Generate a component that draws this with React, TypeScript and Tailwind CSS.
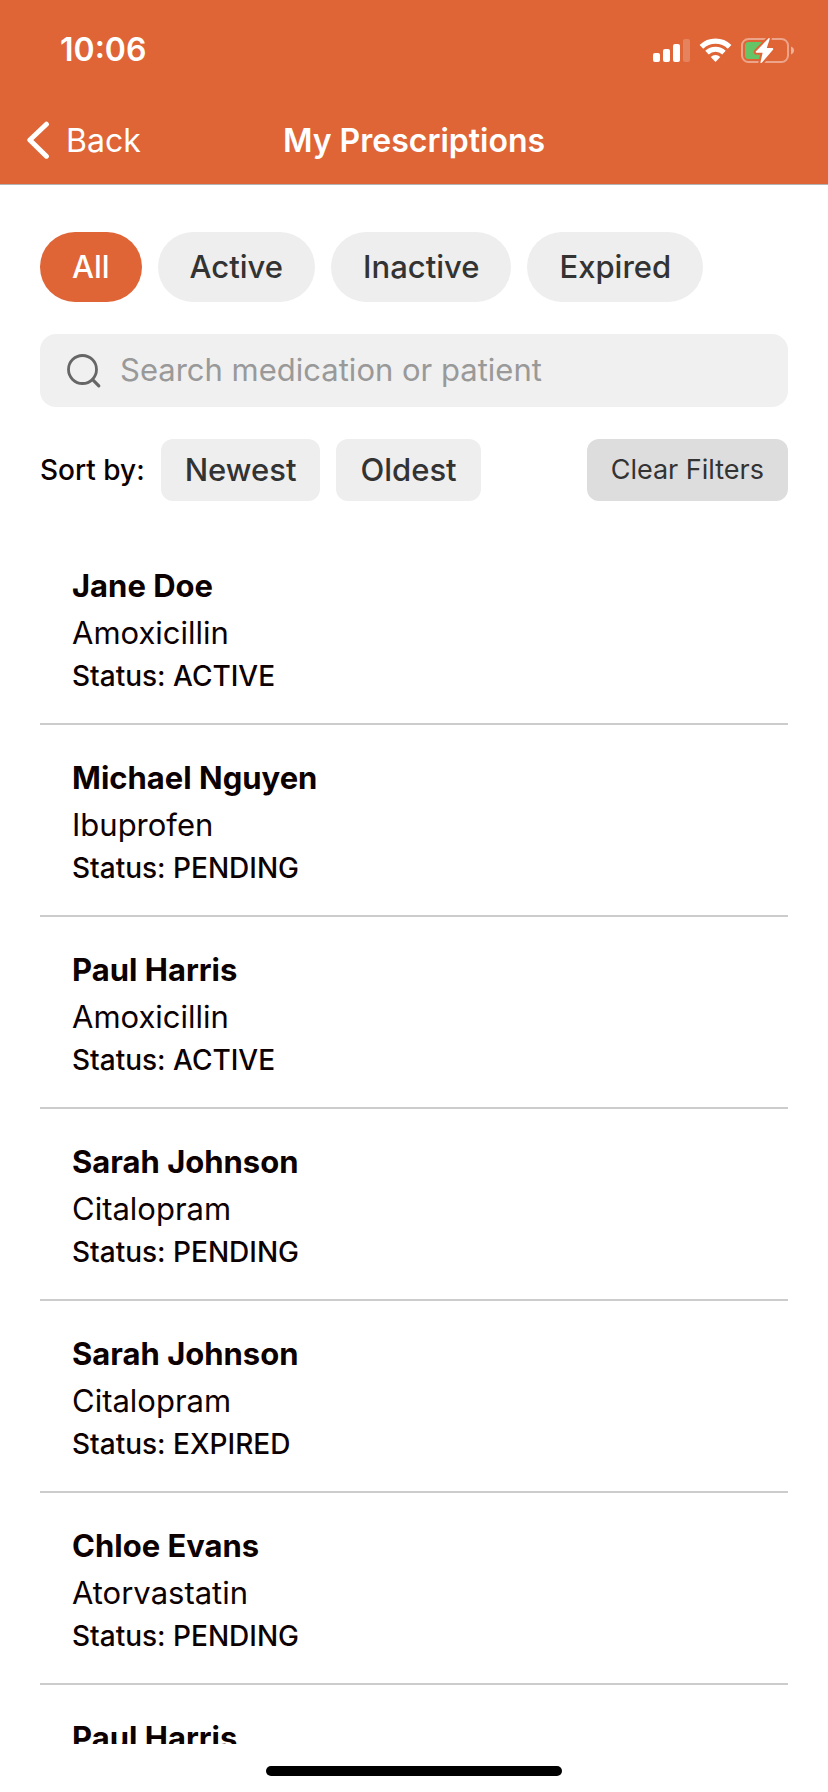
import { useState } from "react";

type Prescription = { id: number; patient: string; medication: string; status: string };

const prescriptions: Prescription[] = [
  { id: 1, patient: "Jane Doe", medication: "Amoxicillin", status: "ACTIVE" },
  { id: 2, patient: "Michael Nguyen", medication: "Ibuprofen", status: "PENDING" },
  { id: 3, patient: "Paul Harris", medication: "Amoxicillin", status: "ACTIVE" },
  { id: 4, patient: "Sarah Johnson", medication: "Citalopram", status: "PENDING" },
  { id: 5, patient: "Sarah Johnson", medication: "Citalopram", status: "EXPIRED" },
  { id: 6, patient: "Chloe Evans", medication: "Atorvastatin", status: "PENDING" },
  { id: 7, patient: "Paul Harris", medication: "Ibuprofen", status: "ACTIVE" },
];

const filters = ["All", "Active", "Inactive", "Expired"];

function SignalIcon() {
  return (
    <svg width="37" height="23" viewBox="0 0 37 23" fill="#fff" aria-hidden="true">
      <rect x="0" y="14" width="7" height="9" rx="2" />
      <rect x="10" y="10" width="7" height="13" rx="2" />
      <rect x="20" y="5" width="7" height="18" rx="2" />
      <rect x="30" y="0" width="7" height="23" rx="2" opacity="0.2" />
    </svg>
  );
}

function WifiIcon() {
  return (
    <svg width="33" height="24" viewBox="0 0 33 24" fill="none" stroke="#fff" aria-hidden="true">
      <path d="M2.4 8.9 A20.2 20.2 0 0 1 30.6 8.9" strokeWidth="5.2" />
      <path d="M8 14.6 A12.2 12.2 0 0 1 25 14.6" strokeWidth="5" />
      <path d="M16.5 24 L11.7 19 A6.8 6.8 0 0 1 21.3 19 Z" fill="#fff" stroke="none" />
    </svg>
  );
}

function BatteryIcon() {
  return (
    <svg width="53" height="27" viewBox="0 0 53 27" fill="none" aria-hidden="true">
      <rect x="1" y="2" width="46" height="23" rx="6.5" stroke="#fff" strokeOpacity="0.42" strokeWidth="2" />
      <path d="M50 9.6 C52 10.3 53 11.8 53 13.5 C53 15.2 52 16.7 50 17.4 Z" fill="#fff" fillOpacity="0.5" />
      <rect x="4" y="5" width="19" height="17" rx="3.5" fill="#65c466" />
      <path
        d="M27.6 1.2 L14.8 14.6 Q14.4 15.6 15.4 15.8 L21.6 15.8 L19.4 25.4 Q20 26.6 21 25.6 L32.2 12.4 Q32.4 11.2 31.4 11 L25.8 11 L28.8 1.8 Q28.6 0.6 27.6 1.2 Z"
        fill="#fff"
        stroke="#df6436"
        strokeWidth="4"
        paintOrder="stroke"
        strokeLinejoin="round"
      />
    </svg>
  );
}

export default function App() {
  const [filter, setFilter] = useState("All");
  const [query, setQuery] = useState("");

  return (
    <div className="flex h-screen flex-col overflow-hidden bg-white font-['Inter','Liberation_Sans',sans-serif] text-[#0d0000]">
      <header className="shrink-0 border-b border-[#b3b3b3] bg-[#df6436] text-white">
        <div className="flex h-24 items-center justify-between pt-1 pr-[34px] pl-[60px]">
          <span className="text-[32px] leading-[38px] font-semibold">10:06</span>
          <div className="flex items-center gap-[9px]">
            <SignalIcon />
            <WifiIcon />
            <BatteryIcon />
          </div>
        </div>
        <div className="grid h-22 grid-cols-[1fr_auto_1fr] items-center pt-0.5">
          <button type="button" className="flex items-center gap-4 pl-[26px] text-[32px] leading-10">
            <svg width="24" height="40" viewBox="0 0 24 40" fill="none" stroke="#fff" strokeWidth="5" strokeLinecap="round" strokeLinejoin="round" aria-hidden="true">
              <path d="M20.4 3.2 L3.8 19 L20.4 35.2" />
            </svg>
            Back
          </button>
          <h1 className="text-[32px] leading-10 font-semibold">My Prescriptions</h1>
        </div>
      </header>

      <main className="flex min-h-0 flex-1 flex-col px-10 pt-[47px]">
        <div className="flex gap-4">
          {filters.map((name) => (
            <button
              key={name}
              type="button"
              aria-pressed={filter === name}
              onClick={() => setFilter(name)}
              className={
                filter === name
                  ? "rounded-[40px] bg-[#df6436] px-8 py-4 text-[31px] leading-[38px] font-medium text-white"
                  : "rounded-[40px] bg-[#eee] px-8 py-4 text-[31px] leading-[38px] font-medium text-[#333]"
              }
            >
              {name}
            </button>
          ))}
        </div>

        <label className="mt-8 flex items-center gap-4 rounded-2xl bg-[#f0f0f0] px-6 py-4">
          <svg className="shrink-0" width="40" height="40" viewBox="0 0 40 40" fill="none" stroke="#666" strokeLinecap="round" aria-hidden="true">
            <circle cx="18.5" cy="18.5" r="14" strokeWidth="2.8" />
            <path d="M28.6 28.6 L34.8 34.8" strokeWidth="3.2" />
          </svg>
          <input
            type="text"
            aria-label="Search medication or patient"
            value={query}
            onChange={(e) => setQuery(e.target.value)}
            placeholder="Search medication or patient"
            className="h-[41px] min-w-0 flex-1 bg-transparent text-[31px] outline-none placeholder:text-[#999]"
          />
        </label>

        <div className="mt-8 flex items-center">
          <span className="mr-4 text-[28px] leading-[38px] font-medium">Sort by:</span>
          <div className="flex gap-4">
            <button type="button" className="rounded-xl bg-[#eee] px-6 py-3 text-[31px] leading-[38px] font-medium text-[#333]">
              Newest
            </button>
            <button type="button" className="rounded-xl bg-[#eee] px-6 py-3 text-[31px] leading-[38px] font-medium text-[#333]">
              Oldest
            </button>
          </div>
          <button type="button" className="ml-auto rounded-xl bg-[#ddd] px-6 py-3 text-[27px] leading-[38px] text-[#333]">
            Clear Filters
          </button>
        </div>

        <ul className="mt-8 min-h-0 flex-1 overflow-y-auto [scrollbar-width:none]">
          {prescriptions.map((p) => (
            <li key={p.id} className="border-b-2 border-[#ccc] px-8 pt-8 pb-[30px]">
              <h2 className="text-[31px] leading-[42px] font-bold">{p.patient}</h2>
              <p className="mt-1.5 text-[31px] leading-10">{p.medication}</p>
              <p className="mt-1.5 text-[28px] leading-[34px] font-medium">Status: {p.status}</p>
            </li>
          ))}
        </ul>
      </main>

      <footer className="flex h-12 shrink-0 justify-center pt-[22px]">
        <div className="h-[10px] w-[296px] rounded-full bg-black" />
      </footer>
    </div>
  );
}
